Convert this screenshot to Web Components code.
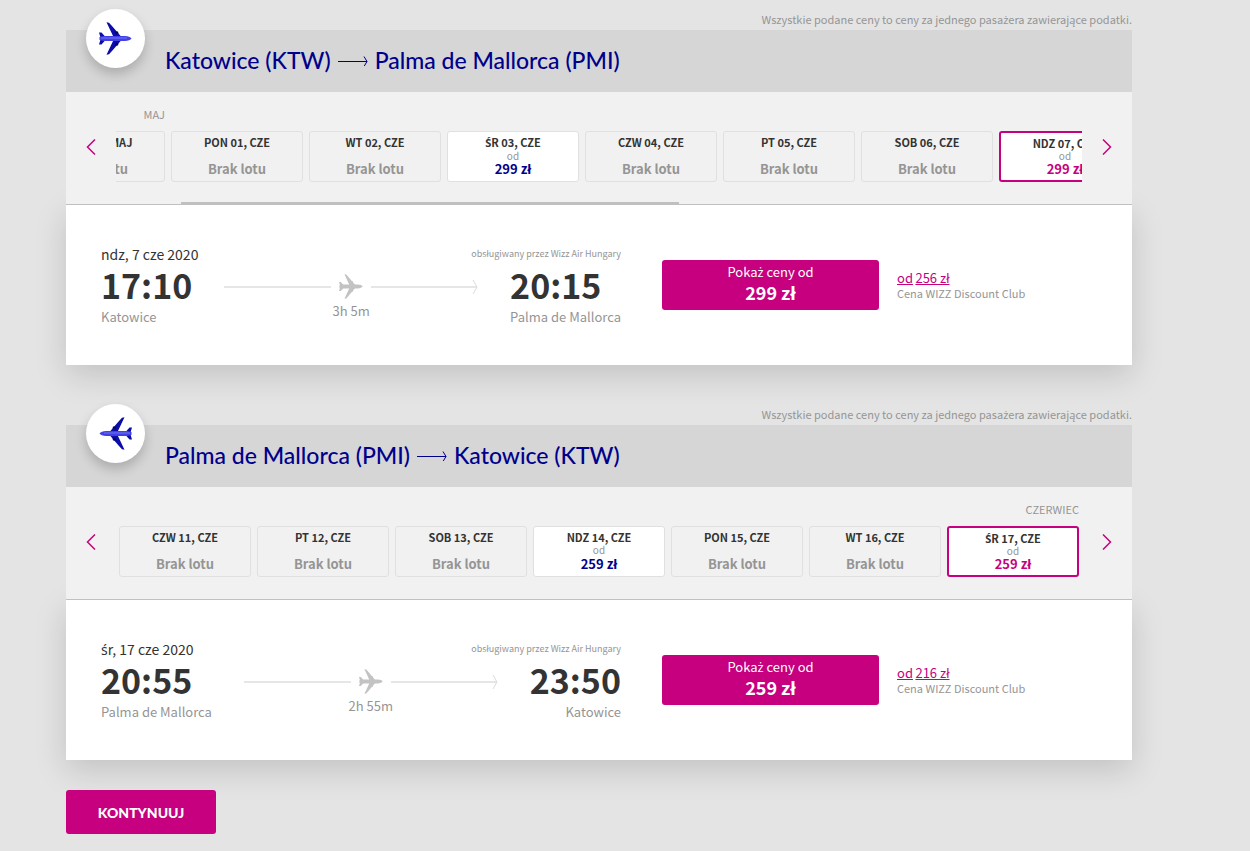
<!DOCTYPE html>
<html lang="pl">
<head>
<meta charset="utf-8">
<meta name="viewport" content="width=device-width, initial-scale=1">
<title>Wybierz lot</title>
<style>
    body {
        margin: 0;
        background-color: #e4e4e4;
        color: #333;
        font-family: "Noto Sans CJK SC", "Noto Sans", sans-serif;
        font-size: 13px;
    }
</style>
</head>
<body>
<flight-select>
    <flight-card from="Katowice (KTW)" to="Palma de Mallorca (PMI)">
        <date-strip slot="dates" scroll="86" scrollbar>
            <date-chip date="NDZ 31, MAJ" month="MAJ"></date-chip>
            <date-chip date="PON 01, CZE"></date-chip>
            <date-chip date="WT 02, CZE"></date-chip>
            <date-chip date="ŚR 03, CZE" price="299 zł"></date-chip>
            <date-chip date="CZW 04, CZE"></date-chip>
            <date-chip date="PT 05, CZE"></date-chip>
            <date-chip date="SOB 06, CZE"></date-chip>
            <date-chip date="NDZ 07, CZE" price="299 zł" selected></date-chip>
        </date-strip>
        <flight-row date="ndz, 7 cze 2020" departs="17:10" origin="Katowice" arrives="20:15" destination="Palma de Mallorca"
            duration="3h 5m" price="299 zł" club="256 zł"></flight-row>
    </flight-card>
    <flight-card from="Palma de Mallorca (PMI)" to="Katowice (KTW)" back>
        <date-strip slot="dates" scroll="0">
            <date-chip date="CZW 11, CZE"></date-chip>
            <date-chip date="PT 12, CZE"></date-chip>
            <date-chip date="SOB 13, CZE"></date-chip>
            <date-chip date="NDZ 14, CZE" price="259 zł"></date-chip>
            <date-chip date="PON 15, CZE"></date-chip>
            <date-chip date="WT 16, CZE"></date-chip>
            <date-chip date="ŚR 17, CZE" price="259 zł" month="CZERWIEC" selected></date-chip>
        </date-strip>
        <flight-row date="śr, 17 cze 2020" departs="20:55" origin="Palma de Mallorca" arrives="23:50" destination="Katowice"
            duration="2h 55m" price="259 zł" club="216 zł"></flight-row>
    </flight-card>
</flight-select>

<script>
// the CJK family has no ś or ż of its own, so those letters come from Noto Sans
function polish(text) {
    return text.replace(/[śŚżŻ]/g, '<span style="font-family: \'Noto Sans\', sans-serif">$&</span>');
}

class PlaneIcon extends HTMLElement {
    constructor() {
        super();
        this.attachShadow({ mode: 'open' })

        this.shadowRoot.innerHTML = `
        <style>
            :host {
                display: block;
                width: 33px;
                height: 33px;
                --wing: #0c0ca8;
                --engine: #05056c;
                --body: #4040e4;
                --shine: #7474f2;
            }

            :host([back]) {
                transform: scaleX(-1);
            }

            :host([muted]) {
                width: 24px;
                height: 25px;
                --wing: #c3c3c3;
                --engine: #c3c3c3;
                --body: #c3c3c3;
                --shine: #c3c3c3;
            }

            svg {
                display: block;
                width: 100%;
                height: 100%;
            }
        </style>
        <svg viewBox="0 0 33 33" preserveAspectRatio="none" aria-hidden="true">
            <path fill="var(--wing)" d="M7.500.3 10 .8 13 4 22.500 15v3L13 29 10 32.2l-2.500.5L14.500 18v-3z"/>
            <path fill="var(--wing)" d="M0 10.500 2.500 10.500 6.500 15v3l-4 4.500H0L1.800 16.500z"/>
            <path fill="var(--engine)" d="M15.500 9.500 19 9.500 19.500 11.500 17 12.500zM15.500 23.500l3.500 0 .5-2-2.500-1zM16 14h5v5h-5z"/>
            <path fill="var(--body)" d="M.5 15 5 14h21c3 0 5.500 1 6.500 2.500-1 1.500-3.500 2.500-6.500 2.500H5L.5 18z"/>
            <path fill="var(--shine)" d="M2 15.500h26v1H2z"/>
        </svg>
        `
    }
}

class DateChip extends HTMLElement {
    constructor() {
        super();
        this.attachShadow({ mode: 'open' })
    }

    connectedCallback() {
        const price = this.getAttribute('price');

        this.shadowRoot.innerHTML = `
        <style>
            :host {
                display: block;
                flex: none;
                width: 132px;
                --accent: #00008c;
            }

            :host([selected]) {
                --accent: #c6007e;
            }

            .month {
                height: 16px;
                margin-bottom: 9px;
                line-height: 16px;
                font-size: 11px;
                text-align: right;
                color: #959595;
            }

            button {
                box-sizing: border-box;
                display: flex;
                flex-direction: column;
                align-items: center;
                justify-content: space-between;
                width: 100%;
                height: 51px;
                padding: 3px 0 4px;
                border: 1px solid #e0e0e0;
                border-radius: 3px;
                background: none;
                font: inherit;
                color: #959595;
                cursor: pointer;
            }

            button.available {
                background-color: #fff;
            }

            :host([selected]) button {
                border: 2px solid var(--accent);
                padding: 3px 0;
            }

            .date {
                line-height: 14px;
                font-size: 11px;
                font-weight: bold;
                color: #333;
            }

            .from {
                line-height: 10px;
                font-size: 10px;
            }

            .price {
                line-height: 16px;
                font-size: 13px;
                font-weight: bold;
            }

            .available .price {
                color: var(--accent);
            }
        </style>
        <div class="month">${this.getAttribute('month') || ''}</div>
        <button type="button" class="${price ? 'available' : ''}">
            <span class="date">${polish(this.getAttribute('date'))}</span>
            ${price ? '<span class="from">od</span>' : ''}
            <span class="price">${price || 'Brak lotu'}</span>
        </button>
        `
    }
}

class DateStrip extends HTMLElement {
    constructor() {
        super();
        this.attachShadow({ mode: 'open' })

        this.shadowRoot.innerHTML = `
        <style>
            /* relative keeps the strip above the shadow of the row below it */
            :host {
                position: relative;
                display: grid;
                grid-template-columns: 50px minmax(0, 1fr) 50px;
                height: 112px;
                background-color: #f1f1f1;
                border-bottom: 1px solid #c0c0c0;
            }

            .nav {
                display: flex;
                align-items: center;
                justify-content: center;
                padding: 0 0 2px;
                border: 0;
                background: none;
                cursor: pointer;
            }

            .nav svg {
                display: block;
                fill: none;
                stroke: #c6007e;
                stroke-width: 1.5;
            }

            .middle {
                display: flex;
                flex-direction: column;
                justify-content: space-between;
            }

            .view {
                display: flex;
                gap: 6px;
                padding: 14px 3px 0;
                overflow: hidden;
            }

            .bar {
                display: none;
                grid-template-columns: 65fr 498fr 403fr;
                height: 2px;
            }

            :host([scrollbar]) .bar {
                display: grid;
            }

            .thumb {
                grid-column: 2;
                background-color: #c0c0c0;
            }
        </style>
        <button type="button" class="nav" aria-label="Poprzednie dni">
            <svg width="10" height="16" viewBox="0 0 10 16"><path d="M9 .5 1.500 8 9 15.500"/></svg>
        </button>
        <div class="middle">
            <div class="view"><slot></slot></div>
            <div class="bar"><div class="thumb"></div></div>
        </div>
        <button type="button" class="nav" aria-label="Następne dni">
            <svg width="10" height="16" viewBox="0 0 10 16"><path d="M1 .5 8.500 8 1 15.500"/></svg>
        </button>
        `

        const view = this.shadowRoot.querySelector('.view');
        const [prev, next] = this.shadowRoot.querySelectorAll('.nav');

        prev.addEventListener('click', () => { view.scrollLeft -= 138; })
        next.addEventListener('click', () => { view.scrollLeft += 138; })
    }

    showStart() {
        this.shadowRoot.querySelector('.view').scrollLeft = Number(this.getAttribute('scroll'));
    }
}

class FlightRow extends HTMLElement {
    constructor() {
        super();
        this.attachShadow({ mode: 'open' })
    }

    connectedCallback() {
        const get = (name) => this.getAttribute(name);

        this.shadowRoot.innerHTML = `
        <style>
            :host {
                display: flex;
                align-items: flex-start;
                height: 124px;
                padding: 36px 35px 0;
                background-color: #fff;
                box-shadow: 0 10px 30px rgba(0, 0, 0, 0.15);
                color: #959595;
            }

            .flight {
                flex: 0 1 520px;
            }

            .top, .times {
                display: flex;
                justify-content: space-between;
            }

            .top {
                height: 26px;
                line-height: 26px;
            }

            .date {
                font-size: 14px;
                color: #333;
            }

            .operator {
                font-size: 9px;
            }

            .times {
                gap: 32px;
            }

            .time {
                line-height: 36px;
                font-size: 34px;
                font-weight: bold;
                color: #333;
            }

            .city {
                line-height: 28px;
            }

            .stop:last-child .city {
                text-align: right;
            }

            .path {
                flex: 1;
                padding-top: 7px;
            }

            .track {
                display: flex;
                align-items: center;
                gap: 8px;
            }

            .line {
                flex: 1;
                height: 2px;
                background-color: #e6e6e6;
            }

            .arrow {
                display: flex;
                flex: 1;
                align-items: center;
            }

            .arrow svg {
                margin-left: -5px;
                fill: none;
                stroke: #dcdcdc;
            }

            .duration {
                line-height: 24px;
                text-align: center;
            }

            .buy {
                flex: 0 0 217px;
                height: 50px;
                margin: 19px 18px 0 41px;
                padding: 0 0 6px;
                border: 0;
                border-radius: 3px;
                background-color: #c6007e;
                color: #fff;
                font: inherit;
                cursor: pointer;
            }

            .buy span {
                line-height: 18px;
            }

            .buy strong {
                display: block;
                line-height: 22px;
                font-size: 18px;
            }

            .club {
                padding-top: 29px;
                line-height: 15px;
                font-size: 11px;
            }

            .club a {
                font-size: 13px;
                color: #c6007e;
            }
        </style>
        <div class="flight">
            <div class="top">
                <span class="date">${polish(get('date'))}</span>
                <span class="operator">obsługiwany przez Wizz Air Hungary</span>
            </div>
            <div class="times">
                <div class="stop">
                    <div class="time">${get('departs')}</div>
                    <div class="city">${get('origin')}</div>
                </div>
                <div class="path">
                    <div class="track">
                        <span class="line"></span>
                        <plane-icon muted></plane-icon>
                        <span class="arrow">
                            <span class="line"></span>
                            <svg width="6" height="16" viewBox="0 0 6 16"><path d="M1 1 5 8 1 15"/></svg>
                        </span>
                    </div>
                    <div class="duration">${get('duration')}</div>
                </div>
                <div class="stop">
                    <div class="time">${get('arrives')}</div>
                    <div class="city">${get('destination')}</div>
                </div>
            </div>
        </div>
        <button type="button" class="buy"><span>${polish('Pokaż ceny od')}</span><strong>${get('price')}</strong></button>
        <div class="club">
            <a href="#club">od</a> <a href="#club">${get('club')}</a>
            <div>Cena WIZZ Discount Club</div>
        </div>
        `
    }
}

class FlightCard extends HTMLElement {
    constructor() {
        super();
        this.attachShadow({ mode: 'open' })
    }

    connectedCallback() {
        this.shadowRoot.innerHTML = `
        <style>
            :host {
                display: block;
            }

            .note {
                box-sizing: border-box;
                height: 30px;
                padding-top: 9px;
                line-height: 20px;
                font-size: 11px;
                text-align: right;
                color: #959595;
            }

            header {
                position: relative;
                z-index: 1;
                box-sizing: border-box;
                display: flex;
                align-items: center;
                height: 62px;
                padding: 0 0 2px 99px;
                background-color: #d6d6d6;
            }

            /* the badge hangs over the top edge of the header */
            .badge {
                position: absolute;
                top: -21px;
                left: 20px;
                display: flex;
                align-items: center;
                justify-content: center;
                width: 59px;
                height: 59px;
                border-radius: 50%;
                background-color: #fff;
                box-shadow: 0 6px 12px rgba(0, 0, 0, 0.2);
            }

            h2 {
                display: flex;
                align-items: center;
                gap: 7px;
                margin: 0;
                font-family: Lato, sans-serif;
                font-size: 23px;
                font-weight: 500;
                color: #00008c;
            }

            h2 svg {
                fill: none;
                stroke: #00008c;
            }
        </style>
        <div class="note">${polish('Wszystkie podane ceny to ceny za jednego pasażera zawierające podatki.')}</div>
        <header>
            <div class="badge"><plane-icon ${this.hasAttribute('back') ? 'back' : ''}></plane-icon></div>
            <h2>
                <span>${this.getAttribute('from')}</span>
                <svg width="30" height="12" viewBox="0 0 30 12" role="img" aria-label="do"><path d="M0 7.500h29M26 2.500l3 5-3 5"/></svg>
                <span>${this.getAttribute('to')}</span>
            </h2>
        </header>
        <slot name="dates"></slot>
        <slot></slot>
        `
    }
}

class FlightSelect extends HTMLElement {
    constructor() {
        super();
        this.attachShadow({ mode: 'open' })

        this.shadowRoot.innerHTML = `
        <style>
            :host {
                display: flex;
                flex-direction: column;
                align-items: stretch;
                gap: 30px;
                padding: 0 118px 17px 66px;
            }

            button {
                align-self: flex-start;
                width: 150px;
                height: 44px;
                padding: 0;
                border: 0;
                border-radius: 3px;
                background-color: #c6007e;
                color: #fff;
                font-family: Lato, sans-serif;
                font-size: 14px;
                font-weight: 900;
                cursor: pointer;
            }
        </style>
        <slot></slot>
        <button type="button">KONTYNUUJ</button>
        `
    }
}

customElements.define('plane-icon', PlaneIcon)
customElements.define('date-chip', DateChip)
customElements.define('date-strip', DateStrip)
customElements.define('flight-row', FlightRow)
customElements.define('flight-card', FlightCard)
customElements.define('flight-select', FlightSelect)

// the strips can only scroll once the cards around them have been built
document.querySelectorAll('date-strip').forEach((strip) => strip.showStart())
</script>
</body>
</html>
